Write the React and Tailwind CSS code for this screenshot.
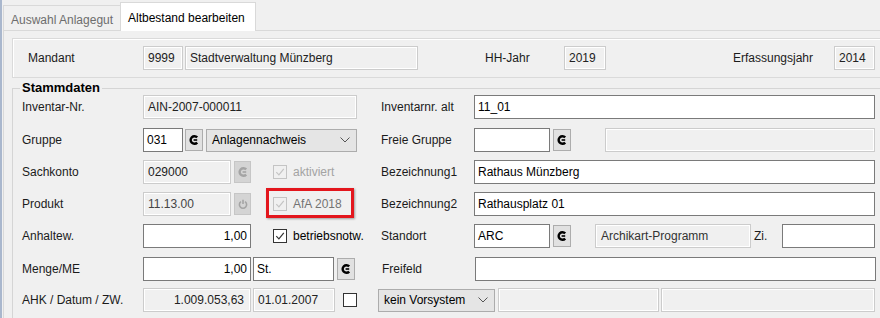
import React from "react";

const PickIcon = () => (
  <svg width="10" height="10" viewBox="0 0 10 10">
    <path d="M8.2 2.4 A3.8 3.8 0 1 0 8.2 7.6" fill="none" stroke="currentColor" strokeWidth="2.4" />
    <rect x="4.6" y="4.2" width="3.6" height="1.6" fill="currentColor" />
  </svg>
);

const PowerIcon = () => (
  <svg width="10" height="10" viewBox="0 0 10 10">
    <path d="M3 2.6 A3.6 3.6 0 1 0 7 2.6" fill="none" stroke="currentColor" strokeWidth="1.6" />
    <line x1="5" y1="0.8" x2="5" y2="5" stroke="currentColor" strokeWidth="1.6" />
  </svg>
);

const Label = ({ className = "w-[121px]", children }) => (
  <div className={`shrink-0 whitespace-nowrap text-[#1b1b1b] ${className}`}>{children}</div>
);

const Input = ({ className = "", children }) => (
  <div className={`h-6 shrink-0 flex items-center px-[3px] bg-white border border-[#7a7a7a] whitespace-nowrap overflow-hidden ${className}`}>
    {children}
  </div>
);

const ReadOnly = ({ className = "", children }) => (
  <div className={`h-6 shrink-0 flex items-center px-[4px] bg-[#f0f0f0] border border-[#cccccc] shadow-[inset_1px_1px_0_#fff,inset_-1px_-1px_0_#fff] text-[#222] whitespace-nowrap overflow-hidden ${className}`}>
    {children}
  </div>
);

const PickBtn = ({ className = "" }) => (
  <div className={`w-[18px] h-[22px] shrink-0 flex items-center justify-center bg-[#e1e1e1] border border-[#adadad] text-black ${className}`}>
    <PickIcon />
  </div>
);

const OffBtn = ({ className = "", children }) => (
  <div className={`w-[17px] h-[22px] shrink-0 flex items-center justify-center bg-[#d4d4d4] border border-[#c6c6c6] text-[#a4a4a4] ${className}`}>
    {children}
  </div>
);

const Check = ({ checked, disabled }) => (
  <div
    className={`w-[14px] h-[14px] shrink-0 flex items-center justify-center border ${
      disabled ? "border-[#c4c4c4] bg-[#f0f0f0]" : "border-[#333333] bg-white"
    }`}
  >
    {checked && (
      <svg width="10" height="10" viewBox="0 0 10 10">
        <polyline points="1.3,5.2 3.9,7.8 8.8,1.8" fill="none" stroke={disabled ? "#c4c4c4" : "#333333"} strokeWidth="1.2" />
      </svg>
    )}
  </div>
);

const Combo = ({ className = "", children }) => (
  <div className={`h-[23px] shrink-0 flex items-center justify-between pl-[5px] pr-[6px] bg-[#e5e5e5] border border-[#acacac] whitespace-nowrap ${className}`}>
    <span>{children}</span>
    <svg width="10" height="6" viewBox="0 0 10 6">
      <polyline points="0.5,0.5 5,5 9.5,0.5" fill="none" stroke="#555" strokeWidth="1" />
    </svg>
  </div>
);

const App = () => (
  <div className="w-[880px] h-[318px] overflow-hidden bg-[#f0f0f0] border-l-2 border-[#a9b7cd] font-['Liberation_Sans',Arial,sans-serif] text-[12px] leading-[14px] text-black">
    {/* tabs */}
    <div className="h-[30px] flex items-end pl-px">
      <div className="w-[117px] h-[25px] flex items-center pl-[7px] pt-[4px] border-t border-l border-[#d9d9d9] text-[#6d6d6d] whitespace-nowrap">
        Auswahl Anlagegut
      </div>
      <div className="relative z-10 -mb-px w-[136px] h-[29px] flex items-center pl-[7px] pt-[1px] bg-white border-t border-l border-r border-[#d9d9d9] whitespace-nowrap">
        Altbestand bearbeiten
      </div>
    </div>

    {/* tab page */}
    <div className="ml-px h-[300px] border-t border-l border-[#d9d9d9] pl-2 pt-[7px]">
      {/* Mandant */}
      <div className="w-[880px] h-[40px] flex items-center pl-[15px] border border-[#dadada] shadow-[inset_1px_1px_0_#fff]">
        <Label className="w-[115px]">Mandant</Label>
        <ReadOnly className="w-[40px]">9999</ReadOnly>
        <ReadOnly className="ml-[2px] w-[233px]">Stadtverwaltung Münzberg</ReadOnly>
        <Label className="ml-[67px] w-[79px]">HH-Jahr</Label>
        <ReadOnly className="w-[42px]">2019</ReadOnly>
        <Label className="ml-[127px] w-[101px]">Erfassungsjahr</Label>
        <ReadOnly className="w-[41px]">2014</ReadOnly>
      </div>

      {/* Stammdaten */}
      <fieldset className="mt-[3px] w-[880px] border border-[#d5d5d5] pl-[9px] pb-[12px]">
        <legend className="-ml-[2px] px-[2px] font-bold text-[13px] leading-[14px]">Stammdaten</legend>

        <div className="flex flex-col">
          <div className="h-6 flex items-center">
            <Label>Inventar-Nr.</Label>
            <ReadOnly className="w-[214px]">AIN-2007-000011</ReadOnly>
            <Label className="ml-[24px] w-[93px]">Inventarnr. alt</Label>
            <Input className="w-[401px]">11_01</Input>
          </div>

          <div className="mt-[9px] h-6 flex items-center">
            <Label>Gruppe</Label>
            <Input className="w-[40px]">031</Input>
            <PickBtn className="ml-[2px]" />
            <Combo className="ml-[3px] w-[151px]">Anlagennachweis</Combo>
            <Label className="ml-[24px] w-[93px]">Freie Gruppe</Label>
            <Input className="w-[76px]" />
            <PickBtn className="ml-[3px]" />
            <ReadOnly className="ml-[34px] w-[270px]" />
          </div>

          <div className="mt-[8px] h-6 flex items-center">
            <Label>Sachkonto</Label>
            <ReadOnly className="w-[88px]">029000</ReadOnly>
            <OffBtn className="ml-[3px]">
              <PickIcon />
            </OffBtn>
            <div className="w-[130px] shrink-0 flex items-center pl-[22px]">
              <Check checked disabled />
              <span className="ml-[6px] text-[#a3a3a3]">aktiviert</span>
            </div>
            <Label className="w-[93px]">Bezeichnung1</Label>
            <Input className="w-[401px]">Rathaus Münzberg</Input>
          </div>

          <div className="mt-[8px] h-6 flex items-center">
            <Label>Produkt</Label>
            <ReadOnly className="w-[88px] text-[#444]">11.13.00</ReadOnly>
            <OffBtn className="ml-[3px]">
              <PowerIcon />
            </OffBtn>
            <div className="relative w-[130px] h-6 shrink-0 flex items-center pl-[22px]">
              <Check checked disabled />
              <span className="ml-[6px] text-[#737373]">AfA 2018</span>
              <div className="absolute left-[15px] top-[-4px] w-[88px] h-[30px] border-[3px] border-[#e3161d] shadow-[1px_1px_2px_rgba(0,0,0,0.35)]" />
            </div>
            <Label className="w-[93px]">Bezeichnung2</Label>
            <Input className="w-[401px]">Rathausplatz 01</Input>
          </div>

          <div className="mt-[8px] h-6 flex items-center">
            <Label>Anhaltew.</Label>
            <Input className="w-[108px] justify-end">1,00</Input>
            <div className="w-[130px] shrink-0 flex items-center pl-[22px]">
              <Check checked />
              <span className="ml-[6px]">betriebsnotw.</span>
            </div>
            <Label className="w-[93px]">Standort</Label>
            <Input className="w-[76px]">ARC</Input>
            <PickBtn className="ml-[3px]" />
            <ReadOnly className="ml-[24px] w-[156px] pl-[5px] text-[#333]">Archikart-Programm</ReadOnly>
            <Label className="ml-[3px] w-[28px]">Zi.</Label>
            <Input className="w-[93px]" />
          </div>

          <div className="mt-[9px] h-6 flex items-center">
            <Label>Menge/ME</Label>
            <Input className="w-[108px] justify-end">1,00</Input>
            <Input className="ml-[2px] w-[81px]">St.</Input>
            <PickBtn className="ml-[3px] w-[17px]" />
            <Label className="ml-[27px] w-[93px]">Freifeld</Label>
            <Input className="w-[401px]" />
          </div>

          <div className="mt-[7px] h-6 flex items-center">
            <Label>AHK / Datum / ZW.</Label>
            <ReadOnly className="w-[108px] justify-end pr-[6px]">1.009.053,63</ReadOnly>
            <ReadOnly className="ml-[2px] w-[82px]">01.01.2007</ReadOnly>
            <div className="ml-[8px]">
              <Check />
            </div>
            <Combo className="ml-[21px] w-[117px] h-6 pr-[5px]">kein Vorsystem</Combo>
            <ReadOnly className="ml-[3px] w-[161px]" />
            <ReadOnly className="ml-[2px] w-[214px]" />
          </div>
        </div>
      </fieldset>
    </div>
  </div>
);

export default App;
